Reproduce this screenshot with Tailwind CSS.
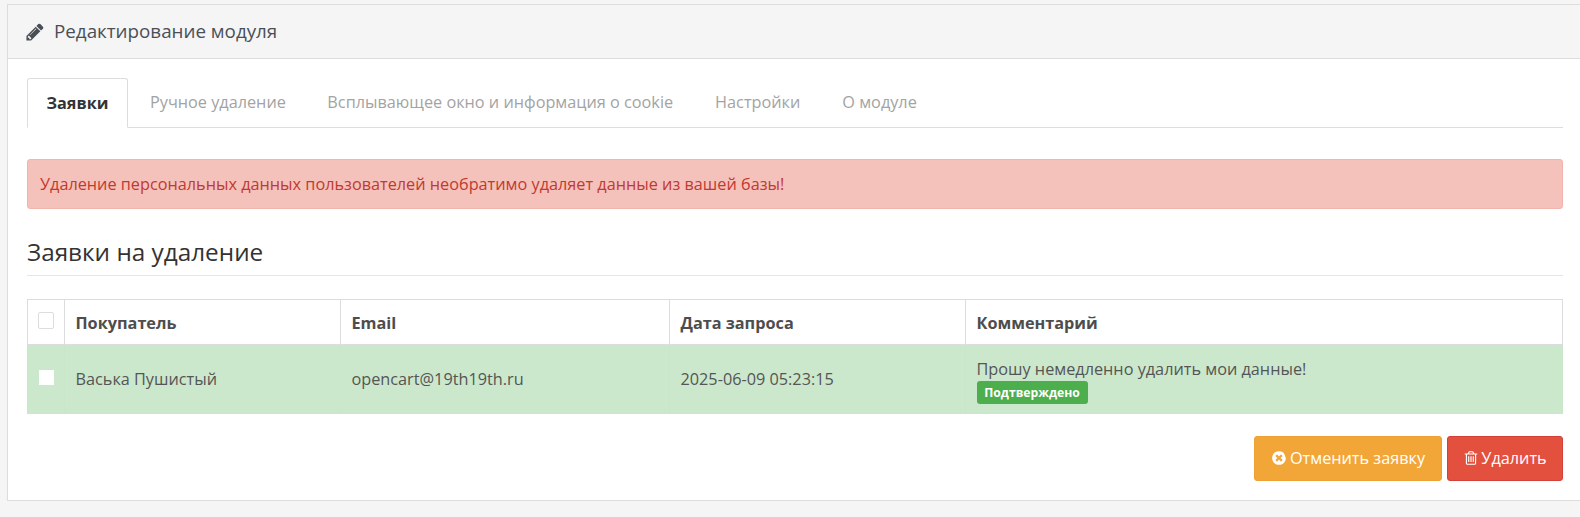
<!DOCTYPE html>
<html lang="ru">
<head>
<meta charset="UTF-8">
<title>Редактирование модуля</title>
<script src="https://cdn.jsdelivr.net/npm/@tailwindcss/browser@4"></script>
</head>
<body class="bg-[#f5f5f5] font-['Open_Sans',sans-serif] text-[16.25px] text-[#4d4d4d] overflow-hidden">
<div class="ml-[7px] mr-[-3px] mt-[4px] h-[497px] bg-white border border-[#dddddd] shadow-[0_1px_1px_rgba(0,0,0,0.05)]">
  <!-- heading -->
  <div class="h-[54px] bg-[#f5f5f5] border-b border-[#dddddd] flex items-center pl-[17px] gap-[9px] text-[18.8px] text-[#4a4f57]">
    <svg class="w-[20px] h-[20px]" viewBox="0 0 1792 1792" fill="#4a4f57"><path d="M491 1536l91-91-235-235-91 91v107h128v128h107zm523-928q0-22-22-22-10 0-17 7l-542 542q-7 7-7 17 0 22 22 22 10 0 17-7l542-542q7-7 7-17zm-54-192l416 416-832 832h-416v-416zm683 96q0 53-37 90l-166 166-416-416 166-165q36-38 90-38 53 0 91 38l235 234q37 39 37 91z"/></svg>
    <span>Редактирование модуля</span>
  </div>
  <div class="pt-[19px] px-[19px]">
    <!-- tabs -->
    <div class="flex border-b border-[#dddddd] h-[50px] text-[#a3a3a3]">
      <div class="w-[101px] h-[50px] mr-[22px] bg-white border border-[#dddddd] border-b-white rounded-t-[3px] flex items-center justify-center font-bold text-[#333333]">Заявки</div>
      <div class="mr-[41.5px] flex items-center">Ручное удаление</div>
      <div class="mr-[42px] flex items-center">Всплывающее окно и информация о cookie</div>
      <div class="mr-[42px] flex items-center">Настройки</div>
      <div class="flex items-center">О модуле</div>
    </div>
    <!-- alert -->
    <div class="mt-[31px] h-[50px] bg-[#f5c1bb] border border-[#f3b4ae] rounded-[3px] flex items-center px-[12px] text-[#bf3a30]">Удаление персональных данных пользователей необратимо удаляет данные из вашей базы!</div>
    <!-- title -->
    <div class="mt-[28px] h-[39px] border-b border-[#e5e5e5] text-[24.3px] leading-[30px] text-[#333333]">Заявки на удаление</div>
    <!-- table -->
    <table class="mt-[23px] w-full table-fixed border-collapse">
      <thead>
        <tr class="h-[45px] font-bold text-left">
          <th class="w-[37px] border border-[#dddddd] text-center align-middle"><span class="inline-block w-[16px] h-[17px] border border-[#dddddd] rounded-[2px] -mt-[6px] align-middle"></span></th>
          <th class="w-[276px] border border-[#dddddd] px-[10.5px] pt-[2px]">Покупатель</th>
          <th class="w-[329px] border border-[#dddddd] px-[10.5px] pt-[2px]">Email</th>
          <th class="w-[296px] border border-[#dddddd] px-[10.5px] pt-[2px]">Дата запроса</th>
          <th class="border border-[#dddddd] px-[10.5px] pt-[2px]">Комментарий</th>
        </tr>
      </thead>
      <tbody>
        <tr class="h-[69px] bg-[#cce8cc] text-[#555555]">
          <td class="text-center border-x border-[#c9e6c9]"><span class="inline-block w-[15px] h-[15px] bg-white -mt-[6px] align-middle"></span></td>
          <td class="px-[10.5px] border-x border-[#c9e6c9]">Васька Пушистый</td>
          <td class="px-[10.5px] border-x border-[#c9e6c9]">opencart@19th19th.ru</td>
          <td class="px-[10.5px] border-x border-[#c9e6c9]">2025-06-09 05:23:15</td>
          <td class="px-[10.5px] pt-[3px] border-x border-[#c9e6c9]">
            <div class="leading-[24px]">Прошу немедленно удалить мои данные!</div>
            <div class="w-[111px] h-[23px] flex items-center justify-center bg-[#4cae4c] rounded-[3px] text-white font-bold text-[12.2px] leading-none">Подтверждено</div>
          </td>
        </tr>
      </tbody>
    </table>
    <!-- buttons -->
    <div class="mt-[22px] flex justify-end gap-[5px]">
      <button class="h-[45px] w-[188px] flex items-center justify-center gap-[3px] bg-[#f3a638] border border-[#eea236] rounded-[3px] text-white">
        <svg class="w-[16px] h-[16px]" viewBox="0 0 1792 1792" fill="#fff"><path d="M1277 1122q0-26-19-45l-181-181 181-181q19-19 19-45 0-27-19-46l-90-90q-19-19-46-19-26 0-45 19l-181 181-181-181q-19-19-45-19-27 0-46 19l-90 90q-19 19-19 46 0 26 19 45l181 181-181 181q-19 19-19 45 0 27 19 46l90 90q19 19 46 19 26 0 45-19l181-181 181 181q19 19 45 19 27 0 46-19l90-90q19-19 19-46zm387-226q0 209-103 385.500t-279.500 279.500-385.500 103-385.500-103-279.500-279.500-103-385.500 103-385.500 279.500-279.500 385.500-103 385.500 103 279.500 385.500 103 385.500z"/></svg>
        Отменить заявку
      </button>
      <button class="h-[45px] w-[116px] flex items-center justify-center gap-[2px] bg-[#e3503e] border border-[#d43f3a] rounded-[3px] text-white">
        <svg class="w-[16px] h-[16px]" viewBox="0 0 1792 1792" fill="#fff"><path d="M704 736v576q0 14-9 23t-23 9h-64q-14 0-23-9t-9-23v-576q0-14 9-23t23-9h64q14 0 23 9t9 23zm256 0v576q0 14-9 23t-23 9h-64q-14 0-23-9t-9-23v-576q0-14 9-23t23-9h64q14 0 23 9t9 23zm256 0v576q0 14-9 23t-23 9h-64q-14 0-23-9t-9-23v-576q0-14 9-23t23-9h64q14 0 23 9t9 23zm128 724v-948h-896v948q0 22 7 40.500t14.500 27 10.500 8.500h832q3 0 10.500-8.500t14.500-27 7-40.500zm-672-1076h448l-48-117q-7-9-17-11h-317q-10 2-17 11zm928 32v64q0 14-9 23t-23 9h-96v948q0 83-47 143.500t-113 60.500h-832q-66 0-113-58.500t-47-141.500v-952h-96q-14 0-23-9t-9-23v-64q0-14 9-23t23-9h309l70-167q15-37 54-63t79-26h320q40 0 79 26t54 63l70 167h309q14 0 23 9t9 23z"/></svg>
        Удалить
      </button>
    </div>
  </div>
</div>
</body>
</html>
